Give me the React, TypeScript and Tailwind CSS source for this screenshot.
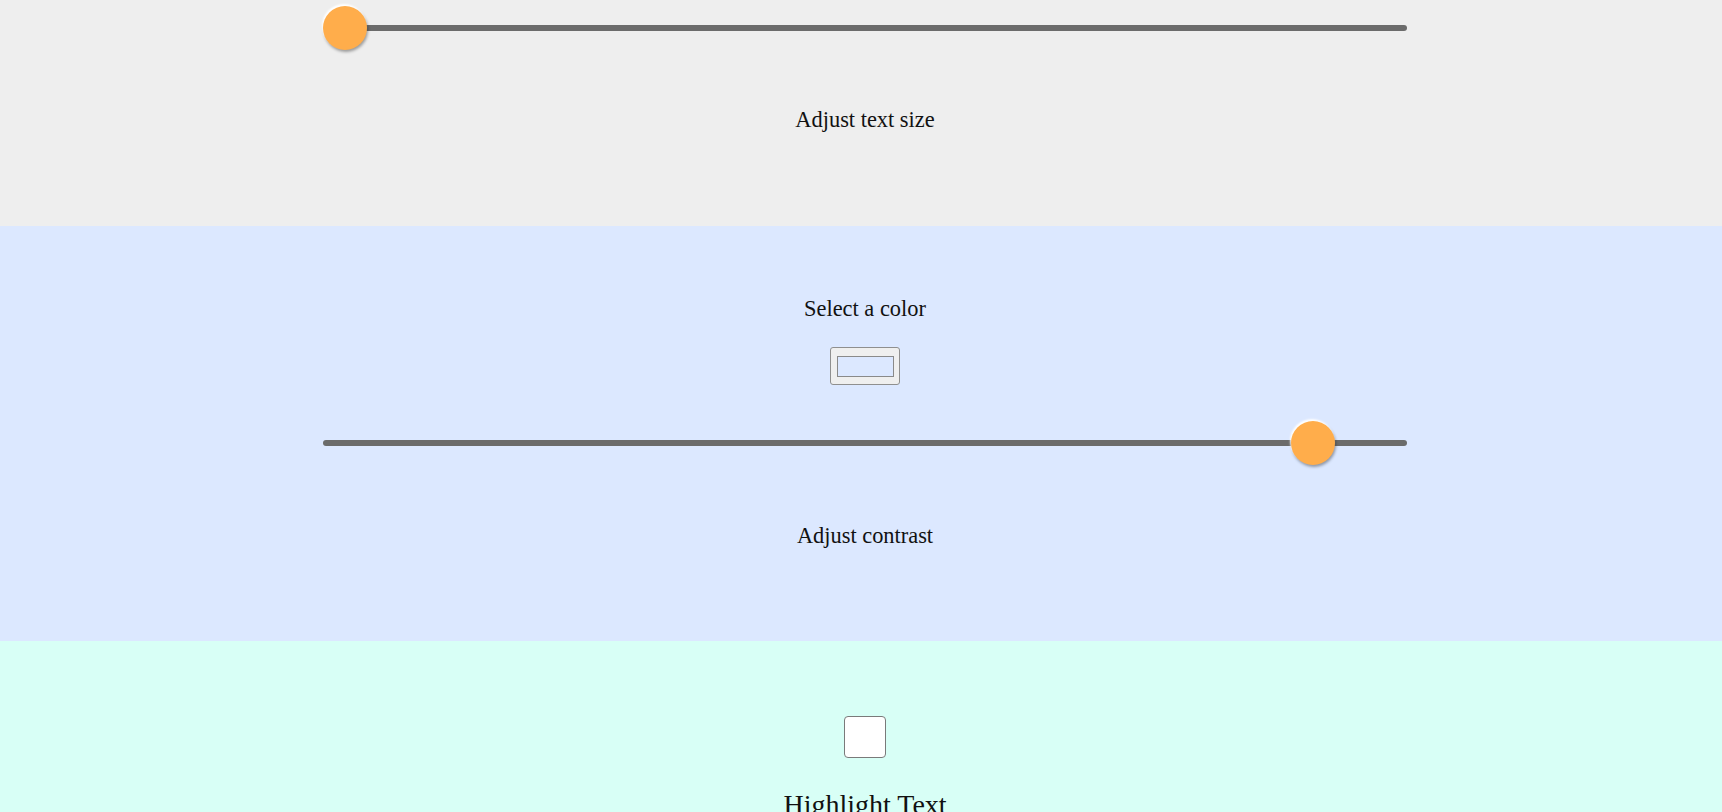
import React from "react";

function Slider({ offset }: { offset: string }) {
  return (
    <div role="slider" className="relative ml-[8px] h-[44px] w-[1084px] flex items-center">
      <div className="h-[6px] w-full rounded-full bg-[#6b6b6b]"></div>
      <div
        className={`absolute top-0 h-[44px] w-[44px] rounded-full bg-[#ffad4b] shadow-[-1px_-2px_2px_#ffffff,1px_2px_3px_rgba(0,0,0,0.35)] ${offset}`}
      ></div>
    </div>
  );
}

export default function App() {
  return (
    <div className="min-h-screen font-['Liberation_Serif',serif] text-[#111]">
      <section className="h-[226px] bg-[#eeeeee] flex flex-col items-center pt-[6px]">
        <Slider offset="left-0" />
        <p className="mt-[57px] ml-[8px] text-[22.4px] leading-[26px]">Adjust text size</p>
      </section>

      <section className="h-[415px] bg-[#dce8ff] flex flex-col items-center pt-[70px]">
        <p className="ml-[8px] text-[22.4px] leading-[26px]">Select a color</p>
        <div className="mt-[25px] ml-[8px] h-[38px] w-[70px] rounded-[3px] border border-[#8f8f8f] bg-[#efefef] flex items-center justify-center">
          <div className="h-[21px] w-[57px] border border-[#8a8a8a] bg-[#dce8ff]"></div>
        </div>
        <div className="mt-[36px]">
          <Slider offset="left-[968px]" />
        </div>
        <p className="mt-[58px] ml-[8px] text-[22.4px] leading-[26px]">Adjust contrast</p>
      </section>

      <section className="h-[400px] bg-[#d8fff6] flex flex-col items-center pt-[75px]">
        <div className="ml-[8px] h-[42px] w-[42px] rounded-[4px] border-[1.5px] border-[#7a7a7a] bg-white"></div>
        <p className="mt-[31px] ml-[8px] text-[28px] leading-[32px]">Highlight Text</p>
      </section>
    </div>
  );
}
